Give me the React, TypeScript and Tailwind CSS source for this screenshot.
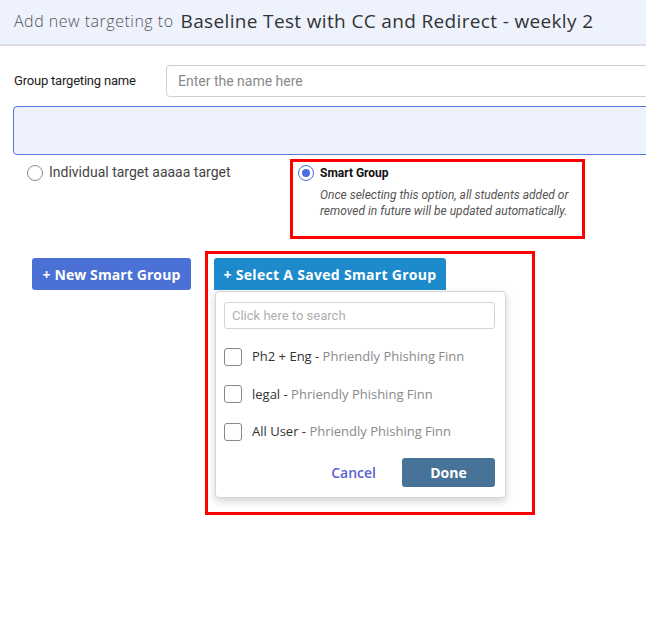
import { useState } from "react";

const items = [
  { name: "Ph2 + Eng", owner: "Phriendly Phishing Finn" },
  { name: "legal", owner: "Phriendly Phishing Finn" },
  { name: "All User", owner: "Phriendly Phishing Finn" },
];

export default function App() {
  const [mode, setMode] = useState("smart");

  return (
    <div className="w-[646px] h-[625px] overflow-hidden bg-white font-['Roboto',sans-serif]">
      <div className="w-[700px]">
        {/* header */}
        <div className="h-[46px] bg-[#eef2fd] border-b-2 border-[#dcdde3] flex items-center px-[14px] pb-[2px]">
          <span className="font-['Open_Sans',sans-serif] text-[16px] tracking-[0.5px] text-[#555] font-light">
            Add new targeting to
          </span>
          <span className="font-['Open_Sans',sans-serif] text-[19px] tracking-[0.35px] text-[#333] ml-[7px]">
            Baseline Test with CC and Redirect - weekly 2
          </span>
        </div>

        {/* name */}
        <div className="flex items-center mt-[19px] pl-[14px]">
          <label className="w-[152px] text-[13px] text-[#222] tracking-[-0.2px]">Group targeting name</label>
          <input
            placeholder="Enter the name here"
            className="flex-1 h-[32px] border border-[#cfcfcf] rounded-[4px] px-[11px] text-[14px] text-[#555] placeholder:text-[#8a8a8a] outline-none"
          />
        </div>

        <div className="ml-[13px] mt-[9px] h-[49px] bg-[#eef2fd] border border-[#5b78d8] rounded-[4px]" />

        {/* radios */}
        <div className="flex items-start mt-[4px] pl-[27px]">
          <label className="flex items-center gap-[6px] mt-[3px] w-[263px] cursor-pointer" onClick={() => setMode("individual")}>
            <span className="w-[16px] h-[16px] rounded-full border border-[#8c8c8c] flex items-center justify-center">
              {mode === "individual" && <span className="w-[8px] h-[8px] rounded-full bg-[#4c6ee0]" />}
            </span>
            <span className="text-[14px] text-[#444]">Individual target aaaaa target</span>
          </label>

          <div className="w-[295px] h-[80px] border-[3px] border-[#ff0000] pl-[5px] pt-[2px]">
            <label className="flex items-center gap-[6px] cursor-pointer" onClick={() => setMode("smart")}>
              <span className="w-[16px] h-[16px] rounded-full border border-[#4c6ee0] flex items-center justify-center">
                {mode === "smart" && <span className="w-[8px] h-[8px] rounded-full bg-[#4c6ee0]" />}
              </span>
              <span className="text-[12px] font-bold text-[#111]">Smart Group</span>
            </label>
            <p className="ml-[22px] mt-[5px] text-[12px] italic text-[#555] leading-[16px]">
              Once selecting this option, all students added or
              <br />
              removed in future will be updated automatically.
            </p>
          </div>
        </div>

        {/* buttons */}
        <div className="flex items-start mt-[12px] pl-[32px]">
          <button className="mt-[7px] w-[159px] h-[32px] rounded-[3px] bg-[#4b71d6] text-white text-[14px] font-bold tracking-[0.1px] font-['Open_Sans',sans-serif]">
            + New Smart Group
          </button>

          <div className="ml-[14px] w-[330px] h-[264px] border-[3px] border-[#ff0000] pl-[6px] pt-[4px]">
            <button className="w-[232px] h-[32px] rounded-t-[3px] bg-[#1d8acb] text-white text-[14px] font-bold tracking-[0.3px] font-['Open_Sans',sans-serif]">
              + Select A Saved Smart Group
            </button>
            <div className="w-[291px] ml-[1px] mt-[1px] bg-white border border-[#d6d6d6] rounded-[4px] shadow-[0_3px_8px_rgba(0,0,0,0.18)] pl-[8px] pr-[10px] pt-[10px] pb-[10px]">
              <input
                placeholder="Click here to search"
                className="w-full h-[27px] border border-[#d4d4d4] rounded-[3px] px-[7px] text-[13px] placeholder:text-[#b0b0b0] outline-none"
              />
              <div className="mt-[9px]">
                {items.map((it) => (
                  <label key={it.name} className="flex items-center h-[37.5px] gap-[10px] cursor-pointer">
                    <span className="w-[18px] h-[18px] border border-[#888] rounded-[3px]" />
                    <span className="font-['Open_Sans',sans-serif] text-[13px] text-[#333]">
                      {it.name} - <span className="text-[#8a8a8a]">{it.owner}</span>
                    </span>
                  </label>
                ))}
              </div>
              <div className="flex items-center justify-end mt-[7px]">
                <button className="text-[14px] font-semibold text-[#5a5fd0] font-['Open_Sans',sans-serif] mr-[26px]">Cancel</button>
                <button className="w-[93px] h-[29px] rounded-[3px] bg-[#477399] text-white text-[14px] font-bold font-['Open_Sans',sans-serif]">
                  Done
                </button>
              </div>
            </div>
          </div>
        </div>
      </div>
    </div>
  );
}
